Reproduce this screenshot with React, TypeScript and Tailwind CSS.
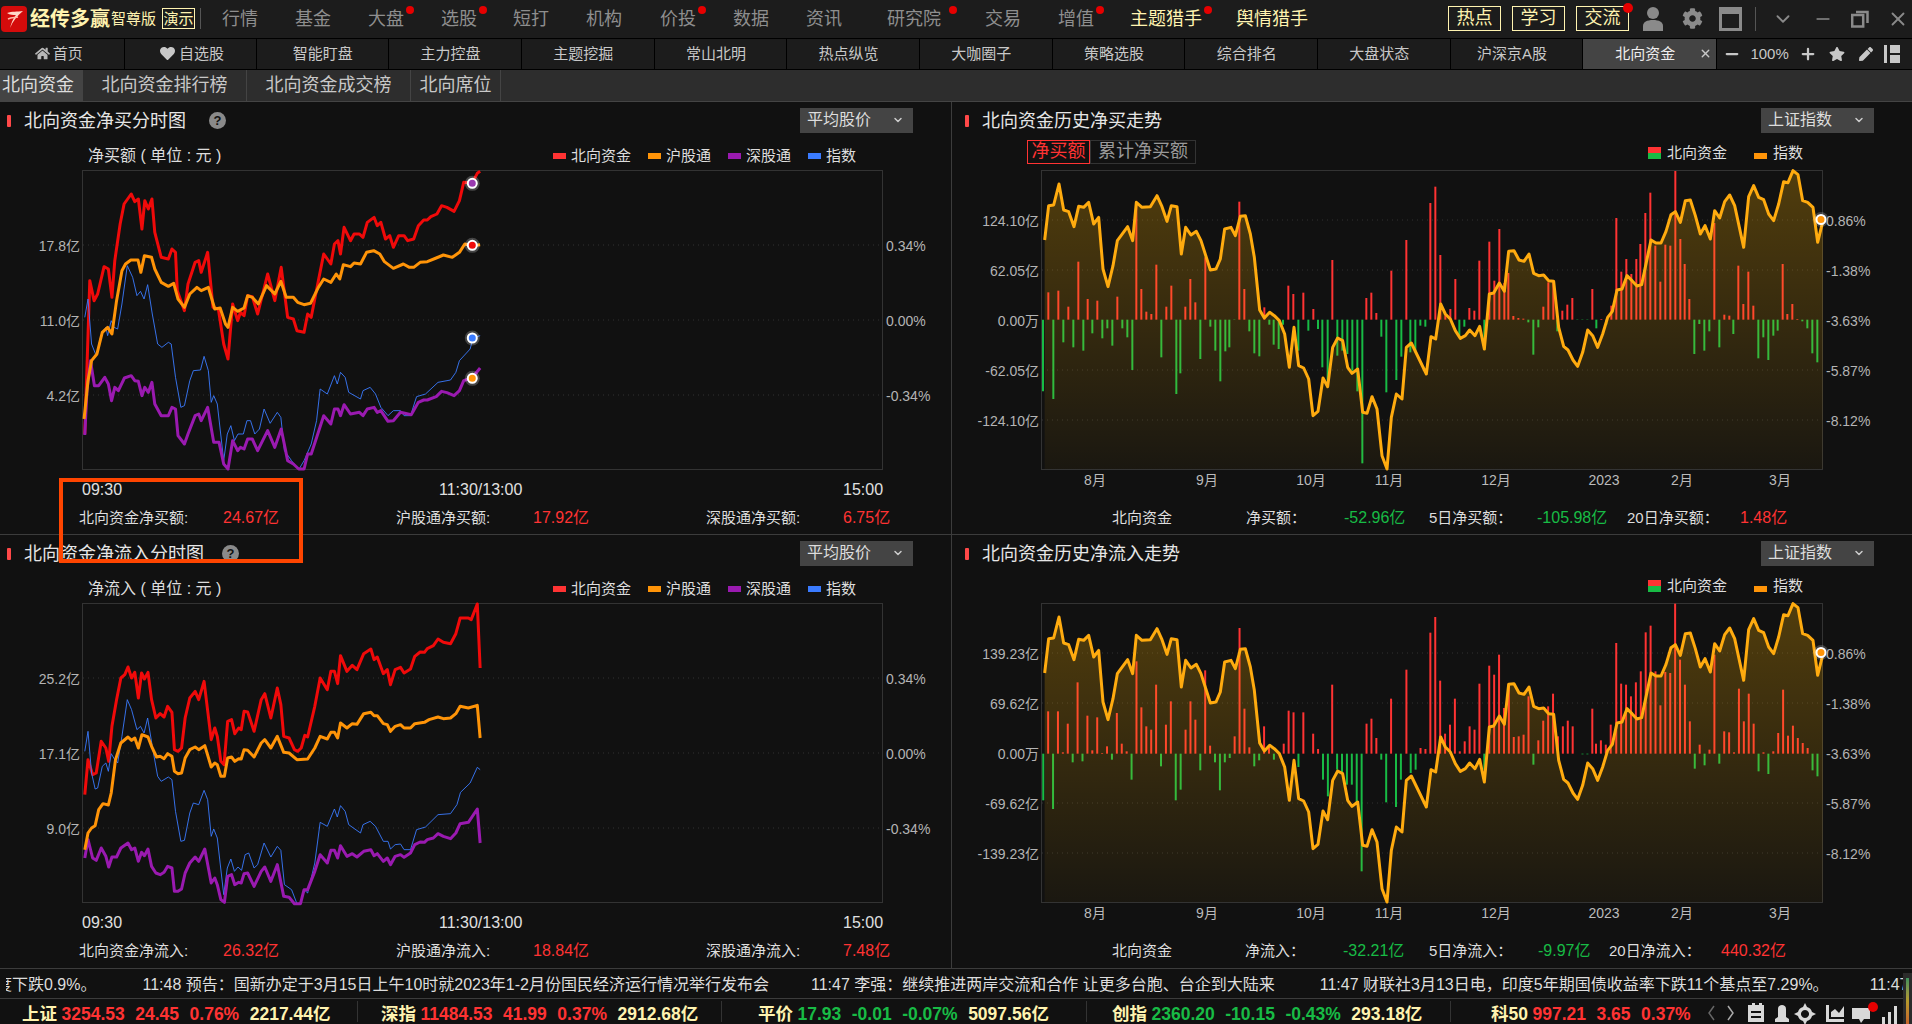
import { ChevronDown, Minus, Plus, X } from "lucide-react";
import { FaCog, FaHeart, FaHome, FaPen, FaStar } from "react-icons/fa";

// points are read off the reference, "x y x y ..."
const parse = (s: string) => {
  const n = s.trim().split(/\s+/).map(Number);
  const out: [number, number][] = [];
  for (let i = 0; i < n.length; i += 2) out.push([n[i], n[i + 1]]);
  return out;
};

const buyRed = "236 1000 250 540 262 600 272 580 290 498 302 505 312 590 320 480 335 370 346 310 366 280 376 303 386 295 396 385 404 300 414 325 424 295 432 395 450 470 470 475 480 445 490 455 495 570 515 630 525 550 545 485 555 480 562 515 580 455 595 620 610 625 625 730 637 775 650 610 664 660 672 635 682 645 692 585 705 588 720 640 748 520 768 600 786 500 804 650 820 655 830 690 850 695 860 640 870 650 890 540 905 460 925 490 935 430 945 420 952 460 962 380 980 420 990 400 1005 400 1015 410 1027 365 1046 350 1055 375 1065 365 1078 415 1090 405 1100 440 1115 405 1130 405 1140 420 1157 415 1170 375 1185 358 1195 358 1205 348 1222 340 1235 315 1250 320 1270 332 1285 300 1297 245 1320 248 1335 218 1343 212";
const buyOrange = "234 955 245 840 255 780 270 760 285 695 300 680 312 700 325 600 340 510 350 490 365 478 385 478 393 515 403 465 423 470 432 505 450 545 470 557 485 548 497 595 515 620 530 580 550 560 562 570 582 560 600 625 615 622 630 670 637 680 650 620 664 632 682 622 692 585 705 590 722 610 745 555 768 580 785 542 800 590 820 590 832 605 850 612 868 608 890 560 905 535 925 545 940 520 950 535 960 492 980 498 990 487 1008 490 1025 455 1045 450 1062 460 1075 483 1100 503 1128 490 1145 500 1157 500 1175 485 1195 483 1220 472 1240 463 1265 470 1285 455 1300 430 1320 435 1343 432";
const buyPurple = "236 1003 242 870 252 780 263 855 275 855 292 830 302 850 311 900 320 860 330 870 347 832 366 825 376 840 386 842 396 885 404 860 414 875 424 845 432 910 450 945 470 945 480 920 490 925 497 1005 515 1030 525 1000 545 945 555 940 562 960 580 920 597 1025 612 1025 625 1090 637 1105 650 1020 664 1050 672 1040 682 1045 692 1015 705 1015 720 1050 748 990 768 1040 786 985 804 1080 820 1090 835 1105 850 1105 860 1060 870 1060 905 945 925 970 935 925 945 925 952 945 962 912 980 940 1005 935 1015 945 1027 925 1046 920 1055 935 1065 930 1085 962 1100 960 1120 935 1150 942 1170 905 1185 898 1195 898 1220 888 1235 872 1250 876 1270 885 1285 870 1297 840 1320 832 1343 802";
const buyBlue = "236 650 245 595 255 730 268 765 280 710 295 680 300 705 310 660 318 680 328 685 340 610 355 495 370 530 382 585 392 572 402 595 412 552 425 640 440 730 452 740 470 725 478 730 490 830 505 920 515 915 530 840 540 810 560 808 570 767 582 810 590 905 597 885 607 910 625 1080 635 1000 645 975 655 1020 665 1000 680 1000 690 960 700 960 712 1000 725 985 738 925 755 968 775 935 785 950 795 1050 815 1080 835 1107 850 1080 870 1030 885 960 895 865 915 880 935 825 943 850 952 815 965 830 975 875 1008 895 1015 870 1035 860 1050 880 1065 920 1085 945 1100 930 1120 930 1130 945 1148 945 1165 888 1190 880 1225 845 1260 838 1275 815 1285 780 1315 745 1323 712 1343 705";

const flowRed = "236 795 245 690 258 735 268 730 282 635 295 655 303 695 312 590 325 510 337 445 348 435 357 412 367 445 376 428 386 505 395 430 403 448 413 428 423 510 435 565 447 552 458 562 468 530 480 548 487 660 497 665 507 655 517 565 530 505 545 485 555 510 570 455 590 630 600 595 607 620 617 695 626 705 636 575 647 570 656 612 667 595 674 600 682 545 692 547 710 605 730 510 740 492 757 565 775 475 785 525 793 620 808 625 823 660 832 665 842 655 852 617 860 622 880 530 895 445 915 480 925 425 935 425 944 462 952 378 970 425 985 407 998 420 1017 372 1037 358 1046 390 1055 382 1072 432 1083 420 1092 465 1105 420 1120 413 1130 430 1148 418 1160 380 1175 367 1187 368 1195 357 1212 348 1225 328 1240 338 1260 342 1275 312 1287 265 1310 265 1318 270 1335 223 1343 415";
const flowOrange = "236 960 245 910 255 895 265 888 275 840 287 822 302 826 310 790 322 690 337 640 357 622 367 632 376 625 386 655 396 615 413 622 423 650 437 682 447 680 458 687 468 672 480 680 487 725 497 732 507 730 517 685 530 660 545 652 555 660 572 648 590 712 600 700 607 705 617 740 627 740 636 685 647 682 656 695 667 687 674 688 682 660 692 662 710 682 730 640 740 630 757 655 775 620 793 668 808 670 830 690 860 688 880 655 895 620 915 628 925 608 935 608 944 625 952 580 970 595 985 582 998 584 1017 552 1037 548 1046 558 1055 558 1072 582 1083 585 1092 605 1105 590 1120 585 1130 595 1148 595 1160 582 1187 578 1200 570 1225 562 1240 567 1260 565 1275 552 1287 530 1310 535 1335 527 1343 625";
const flowPurple = "236 985 245 930 258 985 268 992 282 955 295 980 303 1012 312 982 325 982 337 955 357 940 367 960 376 955 386 995 395 968 403 978 413 958 423 1010 435 1030 447 1035 458 1028 468 1010 480 1015 487 1085 497 1085 507 1078 517 1030 530 1000 545 982 555 995 572 958 590 1060 600 1045 607 1065 617 1110 627 1118 636 1040 647 1035 656 1065 667 1058 674 1060 682 1032 692 1030 710 1070 730 1025 740 1012 757 1055 775 1005 793 1100 808 1103 823 1122 840 1122 850 1080 860 1080 880 1025 895 975 915 1000 925 962 935 962 944 985 952 948 970 980 985 972 998 982 1017 965 1037 960 1046 978 1055 972 1072 995 1083 985 1092 1005 1105 980 1120 975 1130 983 1148 970 1160 945 1175 937 1187 938 1195 930 1212 925 1225 912 1240 920 1260 927 1275 910 1287 882 1310 878 1335 838 1343 940";
const flowBlue = "236 665 245 605 255 730 265 778 272 775 285 710 295 700 302 725 310 672 320 690 328 700 340 620 355 510 367 540 382 600 392 590 402 610 412 565 425 650 440 740 450 755 470 742 480 750 490 845 505 935 515 932 530 850 540 820 555 825 570 782 580 810 590 920 597 898 607 925 625 1095 635 1015 645 988 655 1025 665 1012 675 1022 685 975 695 970 710 1015 720 1005 738 940 757 982 775 950 785 962 795 1065 815 1080 830 1122 840 1122 850 1080 860 1090 880 1000 895 878 915 890 935 838 943 862 952 828 965 845 975 885 1008 910 1015 885 1035 875 1050 890 1072 935 1085 935 1092 958 1105 945 1120 943 1130 960 1148 960 1165 900 1190 892 1225 855 1260 852 1278 825 1288 788 1315 760 1335 713 1343 720";

const gold = "283 418 295 315 310 313 326 250 340 328 355 333 371 378 385 317 400 320 415 305 430 370 445 350 458 505 473 558 488 495 501 420 532 378 547 420 558 305 575 320 600 318 620 285 635 318 650 362 663 315 680 318 693 460 706 380 722 403 738 392 752 420 780 508 797 505 810 475 823 385 842 380 855 405 870 347 885 345 900 400 912 470 928 628 942 652 958 635 972 645 987 660 1003 700 1017 800 1031 680 1045 795 1060 802 1075 835 1088 945 1103 932 1118 832 1132 858 1147 740 1162 712 1177 720 1192 800 1205 818 1222 805 1237 935 1250 938 1265 888 1280 925 1295 1065 1310 1105 1323 950 1338 880 1355 895 1368 740 1383 727 1428 820 1442 708 1456 715 1471 610 1485 640 1500 655 1515 690 1530 713 1545 705 1558 688 1574 705 1588 677 1602 745 1617 580 1630 577 1647 547 1662 572 1675 452 1691 450 1706 478 1721 482 1736 460 1750 518 1765 525 1780 523 1795 540 1810 542 1825 680 1840 737 1853 748 1868 778 1882 797 1897 755 1912 688 1927 705 1942 740 1957 700 1972 650 1986 632 2000 568 2015 565 2030 525 2045 540 2060 556 2074 552 2102 418 2117 427 2132 427 2147 392 2162 342 2175 333 2190 365 2205 300 2220 298 2235 345 2250 400 2264 375 2280 415 2293 330 2308 352 2323 303 2338 283 2353 315 2380 440 2395 288 2410 255 2425 290 2440 297 2455 340 2470 360 2485 310 2500 243 2513 246 2528 210 2543 222 2557 300 2572 305 2588 320 2602 425 2618 360";

const buyBars = "278 872 294 575 309 895 324 570 339 725 354 618 369 740 384 483 399 750 412 595 426 698 441 600 456 713 471 683 486 735 501 588 516 683 531 710 546 808 558 305 573 565 588 633 603 640 618 492 633 770 648 618 663 555 678 880 690 818 705 618 720 535 735 605 750 775 765 470 780 678 795 750 810 842 825 752 837 740 852 658 867 303 882 565 897 692 912 758 927 767 942 620 957 672 970 732 985 745 998 672 1014 555 1029 580 1044 750 1059 576 1074 690 1089 625 1103 685 1116 800 1132 840 1146 478 1161 765 1176 750 1191 760 1206 810 1221 872 1236 1088 1248 592 1263 576 1278 637 1293 708 1308 875 1323 510 1338 838 1353 768 1368 418 1380 755 1395 755 1410 675 1425 678 1440 307 1455 258 1470 463 1485 640 1500 625 1515 535 1527 705 1542 678 1557 622 1572 630 1587 480 1602 748 1617 423 1632 540 1647 385 1662 547 1674 517 1689 646 1704 652 1719 654 1734 665 1749 762 1764 680 1779 618 1794 545 1809 540 1821 692 1836 630 1851 612 1866 592 1881 658 1896 658 1911 658 1926 565 1938 683 1953 655 1968 672 1983 615 1998 352 2013 513 2028 475 2043 520 2058 475 2070 430 2085 337 2100 276 2115 435 2130 543 2145 432 2160 435 2175 211 2190 415 2203 490 2217 595 2232 760 2247 670 2262 750 2277 692 2292 367 2307 740 2322 642 2337 645 2349 700 2364 495 2379 610 2394 513 2409 615 2424 773 2439 710 2454 778 2469 705 2482 690 2497 490 2511 640 2526 610 2541 655 2556 662 2571 683 2586 758 2601 785";
const flowBars = "151 812 159 545 167 838 175 545 183 668 191 582 199 698 207 458 215 695 223 558 231 662 239 563 247 670 255 650 263 690 271 550 279 642 287 665 295 750 303 395 311 533 319 590 327 600 335 465 343 710 351 585 359 515 367 812 375 780 383 600 391 515 399 570 407 722 415 422 423 648 431 698 439 782 447 698 455 685 463 620 471 295 479 537 487 653 495 710 503 692 511 590 519 650 527 690 535 672 543 642 551 543 559 548 567 712 575 548 583 672 591 612 599 658 607 750 615 800 622 465 630 720 638 728 646 765 654 765 662 820 670 1025 678 582 686 567 694 625 702 690 710 818 718 507 726 832 734 750 743 420 750 730 758 720 766 655 774 658 782 309 790 262 798 453 806 612 814 585 822 507 830 665 838 635 846 590 854 600 862 462 870 720 878 408 886 435 894 375 902 535 910 460 918 622 926 620 934 615 942 500 950 705 958 632 966 573 974 530 982 492 990 620 998 590 1006 573 1014 590 1022 672 1030 674 1038 674 1046 537 1052 642 1060 632 1068 645 1076 585 1085 340 1093 462 1101 465 1109 500 1117 458 1125 425 1133 308 1141 288 1149 425 1157 527 1165 427 1173 430 1181 222 1189 390 1197 465 1205 575 1213 717 1221 645 1229 707 1237 660 1245 375 1253 702 1261 605 1269 608 1277 668 1285 477 1293 575 1301 492 1309 582 1317 725 1325 668 1333 733 1341 665 1349 610 1357 480 1365 618 1373 588 1381 625 1389 640 1397 655 1405 722 1413 740";

const RED = "#ff3333";
const GREEN = "#18bb45";
const LABEL = "text-[#ddd]";
const UP = "text-[16px] text-[#ff3333]";
const DOWN = "text-[16px] text-[#18bb45]";

type Line = { pts: string; color: string; width: number };

function MinuteChart({
  lines,
  y0,
  grid,
  markers = [],
}: {
  lines: Line[];
  y0: number;
  grid: number[];
  markers?: { y: number; color: string }[];
}) {
  const sx = (x: number) => (x - 231) / 2.8;
  const sy = (y: number) => (y - y0) / 3;
  return (
    <svg width={799} height={298} className="block overflow-visible">
      {grid.map((y) => (
        <line key={y} x1={0} x2={799} y1={y} y2={y} stroke="#333" strokeDasharray="1 4" />
      ))}
      {lines.map((l) => (
        <polyline
          key={l.color}
          points={parse(l.pts).map(([x, y]) => `${sx(x)},${sy(y)}`).join(" ")}
          fill="none"
          stroke={l.color}
          strokeWidth={l.width}
          strokeLinejoin="round"
        />
      ))}
      {markers.map((m) => (
        <g key={m.color}>
          <circle cx={sx(1321)} cy={sy(m.y)} r={7.5} fill="#fff" opacity={0.22} />
          <circle cx={sx(1321)} cy={sy(m.y)} r={4.5} fill={m.color} stroke="#fff" strokeWidth={2} />
        </g>
      ))}
    </svg>
  );
}

function HistoryChart({
  id,
  bars,
  barX,
  zero,
}: {
  id: string;
  bars: string;
  barX: (x: number) => number;
  zero: number;
}) {
  const pts = parse(gold).map(([x, y]) => [(x - 275) / 3, (y - 211) / 3]);
  const line = pts.map((p) => p.join(",")).join(" ");
  const area = `${pts[0][0]},298 ${line} ${pts[pts.length - 1][0]},298`;
  const base = (zero - (id === "a" ? 211 : 223)) / 3;
  return (
    <svg width={780} height={298} className="block overflow-visible">
      <defs>
        <linearGradient id={id} x1="0" y1="0" x2="0" y2="298" gradientUnits="userSpaceOnUse">
          <stop offset="0" stopColor="#ffb400" stopOpacity={0.27} />
          <stop offset="1" stopColor="#ffb400" stopOpacity={0.04} />
        </linearGradient>
      </defs>
      {[49, 99, 199, 249].map((y) => (
        <line key={y} x1={0} x2={780} y1={y} y2={y} stroke="#333" strokeDasharray="1 4" />
      ))}
      {parse(bars).map(([x, y]) => {
        const top = (y - (id === "a" ? 211 : 223)) / 3;
        return (
          <line
            key={x}
            x1={barX(x)}
            x2={barX(x)}
            y1={base}
            y2={top}
            stroke={top < base ? RED : GREEN}
            strokeWidth={2}
          />
        );
      })}
      <polygon points={area} fill={`url(#${id})`} />
      <polyline points={line} fill="none" stroke="#ffab0f" strokeWidth={3} strokeLinejoin="round" />
      <circle cx={(2612 - 275) / 3} cy={48.5} r={7.5} fill="#fff" opacity={0.2} />
      <circle cx={(2612 - 275) / 3} cy={48.5} r={4.5} fill="#ff9408" stroke="#fff" strokeWidth={2} />
    </svg>
  );
}

function AxisLabels({ side, items }: { side: "left" | "right"; items: { text: string; y: number }[] }) {
  return (
    <>
      {items.map((a) => (
        <span
          key={a.text}
          style={{ top: a.y }}
          className={
            side === "left"
              ? "absolute right-full mr-[3px] -translate-y-1/2 whitespace-nowrap text-[14px] text-[#b4b4b4]"
              : "absolute left-full ml-[4px] -translate-y-1/2 whitespace-nowrap text-[14px] text-[#b4b4b4]"
          }
        >
          {a.text}
        </span>
      ))}
    </>
  );
}

function Select({ label }: { label: string }) {
  return (
    <div className="flex h-[25px] w-[113px] items-center justify-between bg-[#444] pl-[7px] pr-[9px] text-[16px] text-[#ddd]">
      {label}
      <ChevronDown size={12} strokeWidth={3} color="#ccc" />
    </div>
  );
}

function Title({ text, help }: { text: string; help?: string }) {
  return (
    <div className="flex items-center">
      <span className="ml-[7px] h-[12px] w-[4px] rounded-[1px] bg-[#ff4848]" />
      <span className="ml-[13px] text-[18px] leading-[24px] text-[#e6e6e6]">{text}</span>
      {help && (
        <span className={`${help} flex size-[17px] items-center justify-center rounded-full bg-[#8a8a8a] text-[13px] font-bold text-[#111]`}>
          ?
        </span>
      )}
    </div>
  );
}

function Swatch({ color, label }: { color: string; label: string }) {
  return (
    <div className="flex items-center gap-[5px] text-[15px] text-[#ddd]">
      <span className="h-[6px] w-[13px]" style={{ background: color }} />
      {label}
    </div>
  );
}

function SplitSwatch() {
  return (
    <span className="flex h-[12px] w-[13px] flex-col">
      <span className="h-[6px] bg-[#ff3333]" />
      <span className="h-[6px] bg-[#18bb45]" />
    </span>
  );
}

function MinutePanel({
  title,
  help,
  sub,
  y0,
  lines,
  labels,
  markers,
  stats,
}: {
  title: string;
  help: string;
  sub: string;
  y0: number;
  lines: Line[];
  labels: { text: string; y: number }[];
  markers?: { y: number; color: string }[];
  stats: [string, string, string][];
}) {
  return (
    <div className="flex h-full w-[952px] flex-col border-r border-[#3c3c3c]">
      <div className="flex h-[31px] items-end justify-between pr-[38px]">
        <Title text={title} help={help} />
        <Select label="平均股价" />
      </div>
      <div className="flex h-[37px] items-end pb-[2px] pr-[95px]">
        <span className="ml-[88px] h-[24px] text-[16px] text-[#ddd]">{sub}</span>
        <div className="ml-auto flex h-[24px] gap-[17px]">
          <Swatch color="#ff3333" label="北向资金" />
          <Swatch color="#ff9408" label="沪股通" />
          <Swatch color="#9a1ab0" label="深股通" />
          <Swatch color="#3a7bff" label="指数" />
        </div>
      </div>
      <div className="relative ml-[82px] h-[300px] w-[801px] border border-[#333]">
        <MinuteChart lines={lines} y0={y0} grid={[74, 149, 224]} markers={markers} />
        <AxisLabels side="left" items={labels} />
        <AxisLabels
          side="right"
          items={[
            { text: "0.34%", y: 75 },
            { text: "0.00%", y: 150 },
            { text: "-0.34%", y: 225 },
          ]}
        />
      </div>
      <div className="ml-[82px] flex h-[36px] items-center pt-[4px] text-[16px] text-[#e0e0e0]">
        <span className="w-[357px]">09:30</span>
        <span className="w-[404px]">11:30/13:00</span>
        <span>15:00</span>
      </div>
      <div className="flex h-[24px] items-center pl-[79px] text-[15px]">
        {stats.map(([text, cls, color]) => (
          <span key={text} className={`${cls} ${color} whitespace-nowrap`}>
            {text}
          </span>
        ))}
      </div>
    </div>
  );
}

const MONTHS = [
  { t: "8月", x: 54 },
  { t: "9月", x: 166 },
  { t: "10月", x: 270 },
  { t: "11月", x: 348 },
  { t: "12月", x: 455 },
  { t: "2023", x: 563 },
  { t: "2月", x: 641 },
  { t: "3月", x: 739 },
];

function HistoryPanel({
  title,
  top,
  chart,
  labels,
  stats,
}: {
  title: string;
  top: React.ReactNode;
  chart: React.ReactNode;
  labels: { text: string; y: number }[];
  stats: [string, string, string][];
}) {
  return (
    <div className="flex h-full flex-1 flex-col">
      <div className="flex h-[31px] items-end justify-between pr-[38px]">
        <div className="ml-[6px]">
          <Title text={title} />
        </div>
        <Select label="上证指数" />
      </div>
      <div className="flex h-[37px] items-start pt-[7px]">{top}</div>
      <div className="relative ml-[89px] h-[300px] w-[782px] border border-[#333]">
        {chart}
        <AxisLabels side="left" items={labels} />
        <AxisLabels
          side="right"
          items={[
            { text: "0.86%", y: 50 },
            { text: "-1.38%", y: 100 },
            { text: "-3.63%", y: 150 },
            { text: "-5.87%", y: 200 },
            { text: "-8.12%", y: 250 },
          ]}
        />
      </div>
      <div className="relative ml-[89px] h-[36px] text-[14px] text-[#bbb]">
        {MONTHS.map((m) => (
          <span key={m.t} style={{ left: m.x }} className="absolute top-0 -translate-x-1/2">
            {m.t}
          </span>
        ))}
      </div>
      <div className="flex h-[24px] items-center pl-[160px] text-[15px]">
        {stats.map(([text, cls, color]) => (
          <span key={text} className={`${cls} ${color} whitespace-nowrap`}>
            {text}
          </span>
        ))}
      </div>
    </div>
  );
}

const NAV = [
  { t: "行情", c: "ml-[21px]" },
  { t: "基金", c: "ml-[37px]" },
  { t: "大盘", c: "ml-[37px]", dot: true },
  { t: "选股", c: "ml-[37px]", dot: true },
  { t: "短打", c: "ml-[36px]" },
  { t: "机构", c: "ml-[37px]" },
  { t: "价投", c: "ml-[38px]", dot: true },
  { t: "数据", c: "ml-[37px]" },
  { t: "资讯", c: "ml-[37px]" },
  { t: "研究院", c: "ml-[45px]", dot: true, far: true },
  { t: "交易", c: "ml-[44px]" },
  { t: "增值", c: "ml-[37px]", dot: true },
  { t: "主题猎手", c: "ml-[36px]", dot: true, cream: true },
  { t: "舆情猎手", c: "ml-[34px]", cream: true },
];

const TABS = ["主力控盘", "主题挖掘", "常山北明", "热点纵览", "大咖圈子", "策略选股", "综合排名", "大盘状态", "沪深京A股"];

const STATUS = [
  { name: "上证", cls: "w-[358px] pl-[22px]", color: "text-[#ff3333]", vals: ["3254.53", "24.45", "0.76%"], amt: "2217.44亿" },
  { name: "深指", cls: "w-[364px] pl-[23px]", color: "text-[#ff3333]", vals: ["11484.53", "41.99", "0.37%"], amt: "2912.68亿" },
  { name: "平价", cls: "w-[365px] pl-[36px]", color: "text-[#18bb45]", vals: ["17.93", "-0.01", "-0.07%"], amt: "5097.56亿" },
  { name: "创指", cls: "w-[364px] pl-[25px]", color: "text-[#18bb45]", vals: ["2360.20", "-10.15", "-0.43%"], amt: "293.18亿" },
  { name: "科50", cls: "w-[255px] pl-[40px]", color: "text-[#ff3333]", vals: ["997.21", "3.65", "0.37%"], amt: "" },
];

const minuteLabels = (a: string, b: string, c: string) => [
  { text: a, y: 75 },
  { text: b, y: 150 },
  { text: c, y: 225 },
];

const historyLabels = (a: string, b: string) => [
  { text: `${a}亿`, y: 50 },
  { text: `${b}亿`, y: 100 },
  { text: "0.00万", y: 150 },
  { text: `-${b}亿`, y: 200 },
  { text: `-${a}亿`, y: 250 },
];

export default function App() {
  return (
    <div className="relative flex h-[1024px] w-[1912px] flex-col overflow-hidden bg-[#111] [font-family:'Liberation_Sans','Noto_Sans_CJK_SC',sans-serif]">
      {/* title bar */}
      <div className="flex h-[38px] items-center bg-[#1c1c1c]">
        <svg width={26} height={26} viewBox="0 0 26 26" className="ml-px shrink-0">
          <rect width={26} height={26} rx={4} fill="#d40b0b" />
          <path d="M6 7 C11 5 16 6 22 5 C16 10 12 15 9 22 C11 15 13 11 15 9 C12 9 9 9 6 7Z" fill="#ffd9c9" />
          <path d="M7 13 C11 11 14 12 17 11" stroke="#ffb9a6" strokeWidth={1.5} fill="none" />
        </svg>
        <span className="ml-[3px] text-[20px] font-bold text-[#fff3b0]">经传多赢</span>
        <span className="ml-px text-[15px] text-[#fff3b0]">智尊版</span>
        <span className="ml-[6px] flex h-[21px] w-[33px] items-center justify-center border border-[#fff3b0] text-[15px] text-[#fff3b0]">
          演示
        </span>
        <span className="ml-[5px] h-[21px] w-px bg-[#555]" />
        {NAV.map((n) => (
          <span key={n.t} className={`${n.c} relative text-[18px] leading-[24px] ${n.cream ? "text-[#fff3b0]" : "text-[#8e8e8e]"}`}>
            {n.t}
            {n.dot && (
              <span className={`absolute left-full top-[-1px] size-[8px] rounded-full bg-[#e60000] ${n.far ? "ml-[8px]" : "ml-[2px]"}`} />
            )}
          </span>
        ))}
        <div className="ml-[140px] flex gap-[11px]">
          {["热点", "学习", "交流"].map((b) => (
            <span key={b} className="relative flex h-[25px] w-[53px] items-center justify-center border border-[#fff3b0] text-[18px] text-[#fff3b0]">
              {b}
              {b === "交流" && <span className="absolute right-[-5px] top-[-4px] size-[10px] rounded-full bg-[#e60000]" />}
            </span>
          ))}
        </div>
        <svg width={20} height={26} viewBox="0 0 20 26" className="ml-[14px]" fill="#8a8a8a">
          <circle cx={10} cy={7} r={6} />
          <path d="M0 25 V20 C0 16 4 14 10 14 C16 14 20 16 20 20 V25Z" />
        </svg>
        <FaCog size={21} color="#8a8a8a" className="ml-[19px]" />
        <span className="ml-[16px] h-[24px] w-[23px] border-[3px] border-t-[7px] border-[#8a8a8a]" />
        <span className="ml-[13px] h-[24px] w-px bg-[#555]" />
        <ChevronDown size={22} color="#8a8a8a" className="ml-[16px]" />
        <Minus size={20} color="#8a8a8a" className="ml-[19px]" />
        <svg width={18} height={18} viewBox="0 0 18 18" className="ml-[18px]" fill="none" stroke="#8a8a8a" strokeWidth={2.5}>
          <rect x={1.2} y={5} width={11} height={11.5} />
          <path d="M5 2 H16.5 V13" />
        </svg>
        <X size={22} color="#8a8a8a" className="ml-[18px]" />
      </div>

      {/* page tabs */}
      <div className="flex h-[32px] items-stretch border-y border-black bg-[#1c1c1c] text-[15px] text-[#c8c8c8]">
        <div className="flex w-[124.5px] items-center justify-center gap-[3px] border-r border-black pr-[6px]">
          <FaHome size={15} color="#b8b8b8" />
          首页
        </div>
        <div className="flex w-[132px] items-center justify-center gap-[4px] border-r border-black pl-[4px]">
          <FaHeart size={15} color="#c8c8c8" />
          自选股
        </div>
        <div className="flex w-[132.7px] items-center justify-center border-r border-black pl-px">智能盯盘</div>
        {TABS.map((t) => (
          <div key={t} className="flex w-[132.7px] items-center justify-center border-r border-black pr-[9px]">
            {t}
          </div>
        ))}
        <div className="relative flex w-[134px] items-center justify-center border-r border-black bg-[#444] pr-[9px] text-[#eee]">
          北向资金
          <X size={13} color="#c8c8c8" strokeWidth={2.5} className="absolute right-[4px]" />
        </div>
        <div className="flex flex-1 items-center text-[#c8c8c8]">
          <Minus size={18} strokeWidth={3} className="ml-[6px]" />
          <span className="ml-[9px]">100%</span>
          <Plus size={18} strokeWidth={3} className="ml-[10px]" />
          <FaStar size={16} className="ml-[12px]" />
          <FaPen size={14} className="ml-[14px]" />
          <svg width={16} height={18} viewBox="0 0 16 18" className="ml-[11px]" fill="#c8c8c8">
            <rect width={3} height={18} />
            <rect x={6} width={10} height={8} />
            <rect x={6} y={10} width={10} height={8} />
          </svg>
        </div>
      </div>

      {/* sub tabs */}
      <div className="flex h-[32px] border-b border-[#444] bg-[#2d2d2d] text-[18px] text-[#c8c8c8]">
        <div className="flex w-[83px] items-center bg-[#444] pl-[2px] text-[#ddd]">北向资金</div>
        <div className="flex w-[164px] items-center justify-center border-r border-[#444]">北向资金排行榜</div>
        <div className="flex w-[164px] items-center justify-center border-r border-[#444]">北向资金成交榜</div>
        <div className="flex w-[90px] items-center justify-center border-r border-[#444]">北向席位</div>
      </div>

      {/* four charts */}
      <div className="flex h-[434px] border-b border-[#3c3c3c]">
        <MinutePanel
          title="北向资金净买分时图"
          help="ml-[23px]"
          sub="净买额 ( 单位 : 元 )"
          y0={211}
          lines={[
            { pts: buyRed, color: "#f00a0a", width: 3 },
            { pts: buyBlue, color: "#3a7bff", width: 0.9 },
            { pts: buyPurple, color: "#9a1ab0", width: 3 },
            { pts: buyOrange, color: "#ff9408", width: 3 },
          ]}
          labels={minuteLabels("17.8亿", "11.0亿", "4.2亿")}
          markers={[
            { y: 248, color: "#9a3ab0" },
            { y: 434, color: "#f00a0a" },
            { y: 712, color: "#3a7bff" },
            { y: 833, color: "#ff9408" },
          ]}
          stats={[
            ["北向资金净买额:", "w-[144px]", LABEL],
            ["24.67亿", "w-[173px]", UP],
            ["沪股通净买额:", "w-[137px]", LABEL],
            ["17.92亿", "w-[173px]", UP],
            ["深股通净买额:", "w-[137px]", LABEL],
            ["6.75亿", "", UP],
          ]}
        />
        <HistoryPanel
          title="北向资金历史净买走势"
          top={
            <>
              <span className="ml-[75px] flex h-[24px] w-[63px] items-center justify-center border border-[#ff3333] text-[18px] text-[#ff3333]">净买额</span>
              <span className="flex h-[24px] w-[106px] items-center justify-center border border-[#333] text-[18px] text-[#999]">累计净买额</span>
              <div className="ml-[452px] mt-px flex h-[24px] items-center gap-[6px] text-[15px] text-[#ddd]">
                <SplitSwatch />
                北向资金
                <span className="ml-[21px] mt-[6px] h-[6px] w-[13px] bg-[#ff9408]" />
                指数
              </div>
            </>
          }
          chart={<HistoryChart id="a" bars={buyBars} zero={657} barX={(x) => (x - 275) / 3} />}
          labels={historyLabels("124.10", "62.05")}
          stats={[
            ["北向资金", "w-[134px]", LABEL],
            ["净买额：", "w-[98px]", LABEL],
            ["-52.96亿", "w-[85px]", DOWN],
            ["5日净买额：", "w-[108px]", LABEL],
            ["-105.98亿", "w-[90px]", DOWN],
            ["20日净买额：", "w-[113px]", LABEL],
            ["1.48亿", "", UP],
          ]}
        />
      </div>
      <div className="flex h-[435px] border-b border-[#3c3c3c]">
        <MinutePanel
          title="北向资金净流入分时图"
          help="ml-[18px]"
          sub="净流入 ( 单位 : 元 )"
          y0={223}
          lines={[
            { pts: flowRed, color: "#f00a0a", width: 3 },
            { pts: flowBlue, color: "#3a7bff", width: 0.9 },
            { pts: flowPurple, color: "#9a1ab0", width: 3 },
            { pts: flowOrange, color: "#ff9408", width: 3 },
          ]}
          labels={minuteLabels("25.2亿", "17.1亿", "9.0亿")}
          stats={[
            ["北向资金净流入:", "w-[144px]", LABEL],
            ["26.32亿", "w-[173px]", UP],
            ["沪股通净流入:", "w-[137px]", LABEL],
            ["18.84亿", "w-[173px]", UP],
            ["深股通净流入:", "w-[137px]", LABEL],
            ["7.48亿", "", UP],
          ]}
        />
        <HistoryPanel
          title="北向资金历史净流入走势"
          top={
            <div className="ml-[696px] mt-px flex h-[24px] items-center gap-[6px] text-[15px] text-[#ddd]">
              <SplitSwatch />
              北向资金
              <span className="ml-[21px] mt-[6px] h-[6px] w-[13px] bg-[#ff9408]" />
              指数
            </div>
          }
          chart={<HistoryChart id="b" bars={flowBars} zero={672} barX={(x) => (x - 149) / 1.63} />}
          labels={historyLabels("139.23", "69.62")}
          stats={[
            ["北向资金", "w-[133px]", LABEL],
            ["净流入：", "w-[98px]", LABEL],
            ["-32.21亿", "w-[86px]", DOWN],
            ["5日净流入：", "w-[109px]", LABEL],
            ["-9.97亿", "w-[71px]", DOWN],
            ["20日净流入：", "w-[112px]", LABEL],
            ["440.32亿", "", UP],
          ]}
        />
      </div>

      {/* news ticker */}
      <div className="flex h-[30px] border-b border-[#3c3c3c] pl-[6px] pr-[7px] text-[16px] text-[#ddd]">
        <div className="flex flex-1 items-center overflow-hidden whitespace-nowrap pt-[2px]">
          <span className="-ml-[10px]">度下跌0.9%。</span>
          <span className="ml-[46px]">11:48 预告：国新办定于3月15日上午10时就2023年1-2月份国民经济运行情况举行发布会</span>
          <span className="ml-[42px]">11:47 李强：继续推进两岸交流和合作 让更多台胞、台企到大陆来</span>
          <span className="ml-[45px]">11:47 财联社3月13日电，印度5年期国债收益率下跌11个基点至7.29%。</span>
          <span className="ml-[41px]">11:47</span>
        </div>
      </div>

      {/* index strip */}
      <div className="flex flex-1 text-[17.5px] font-bold leading-[18px]">
        {STATUS.map((s, i) => (
          <div key={s.name} className={`${s.cls} mt-[2px] flex h-[21px] items-center gap-[10.5px] whitespace-nowrap pt-[6px] ${i < 4 ? "border-r border-[#333]" : ""}`}>
            <span className="-mr-[6px] text-[#fff3b0]">{s.name}</span>
            {s.vals.map((v) => (
              <span key={v} className={s.color}>
                {v}
              </span>
            ))}
            {s.amt && <span className="text-[#fff3b0]">{s.amt}</span>}
          </div>
        ))}
        <svg width={196} height={24} viewBox="0 0 196 24" className="-ml-[2px] mt-px shrink-0" fill="#d8d8d8">
          <path d="M10 6 L5 13 L10 20" stroke="#666" strokeWidth={1.5} fill="none" />
          <path d="M24 6 L29 13 L24 20" stroke="#aaa" strokeWidth={1.5} fill="none" />
          <path d="M44 5 H48 V3 H51 V5 H55 V3 H58 V5 H60 V22 H44Z M47 11 V13 H57 V11Z M47 16 V18 H57 V16Z" fillRule="evenodd" />
          <path d="M71 22 V19 L74 17 V9 C74 6 76 5 78 5 C80 5 82 6 82 9 V17 L85 19 V22Z" />
          <path d="M101 3 L103 7 A7 7 0 0 1 108 12 L112 14 L108 16 A7 7 0 0 1 103 21 L101 25 L99 21 A7 7 0 0 1 94 16 L90 14 L94 12 A7 7 0 0 1 99 7Z M101 10 A4 4 0 1 0 101.01 10Z" fillRule="evenodd" />
          <path d="M122 5 H125 V19 H140 V22 H122Z M127 17 V12 L131 9 L135 13 L140 6 V17Z" />
          <path d="M148 8 H166 V19 H160 L157 23 L155 19 H148Z" />
          <circle cx={169} cy={7} r={5} fill="#e60000" />
          <path d="M178 17 H181 V24 H178Z M184 12 H187 V24 H184Z M190 6 H193 V24 H190Z" />
        </svg>
      </div>

      {/* level meter at the corner */}
      <div className="absolute bottom-0 right-0 flex h-[51px] w-[9px] justify-center bg-[#2b2b2b]">
        <span className="mt-[5px] w-[3px] bg-gradient-to-b from-[#3a8f5a] via-[#b59a2c] to-[#c8642c]" />
      </div>

      {/* the hand drawn highlight box */}
      <div className="absolute left-[59px] top-[478px] h-[85px] w-[244px] border-[4px] border-[#ff4500]" />
    </div>
  );
}
